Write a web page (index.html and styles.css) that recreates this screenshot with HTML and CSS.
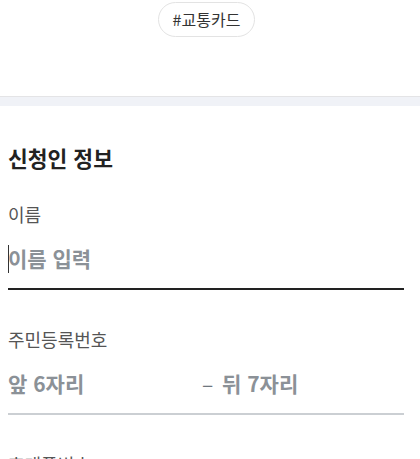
FILE: index.html
```html
<!DOCTYPE html>
<html lang="ko">
<head>
<meta charset="utf-8">
<link rel="stylesheet" href="styles.css">
</head>
<body>
<div class="tags"><span class="tag">#교통카드</span></div>
<div class="divider"></div>
<section class="form">
  <h2 class="title">신청인 정보</h2>
  <div class="field">
    <div class="label">이름</div>
    <div class="input focused"><span class="caret"></span><span class="ph">이름 입력</span></div>
  </div>
  <div class="field">
    <div class="label">주민등록번호</div>
    <div class="input split"><span class="ph front">앞 6자리</span><span class="dash">–</span><span class="ph">뒤 7자리</span></div>
  </div>
  <div class="field">
    <div class="label">휴대폰번호</div>
  </div>
</section>
</body>
</html>
```

FILE: styles.css
```css
* { box-sizing: border-box; }
html, body { margin: 0; padding: 0; background: #fff; }
body {
  font-family: "Noto Sans CJK KR", "Noto Sans", sans-serif;
  color: #222;
  overflow: hidden;
}
.tags {
  height: 96px;
  padding: 2px 15px 0 8px;
  display: flex;
  justify-content: center;
  align-items: flex-start;
}
.tag {
  display: inline-block;
  height: 35px;
  line-height: 33px;
  padding: 0 14px;
  border: 1px solid #e3e3e3;
  border-radius: 18px;
  font-size: 16px;
  color: #333;
}
.divider {
  height: 10px;
  border-top: 1px solid #e4e4e6;
  background: #f0f2f7;
}
.form {
  padding: 38px 16px 0 8px;
}
.title {
  margin: 0;
  font-size: 21.5px;
  line-height: 28px;
  font-weight: 700;
  color: #222;
}
.field { margin-top: 37px; }
.field:first-of-type { margin-top: 30px; }
.label {
  font-size: 18px;
  line-height: 25px;
  color: #555;
}
.input {
  margin-top: 17px;
  padding-bottom: 15px;
  border-bottom: 2px solid #cbcfd3;
  font-size: 21px;
  line-height: 29px;
  font-weight: 700;
  display: flex;
  align-items: center;
}
.input.focused { border-bottom-color: #222; }
.ph { color: #8b9197; }
.caret {
  width: 1px;
  height: 28px;
  background: #333;
  margin-right: -1px;
}
.front { width: 194px; }
.dash {
  color: #6f767e;
  width: 20px;
  font-weight: 400;
}
```
